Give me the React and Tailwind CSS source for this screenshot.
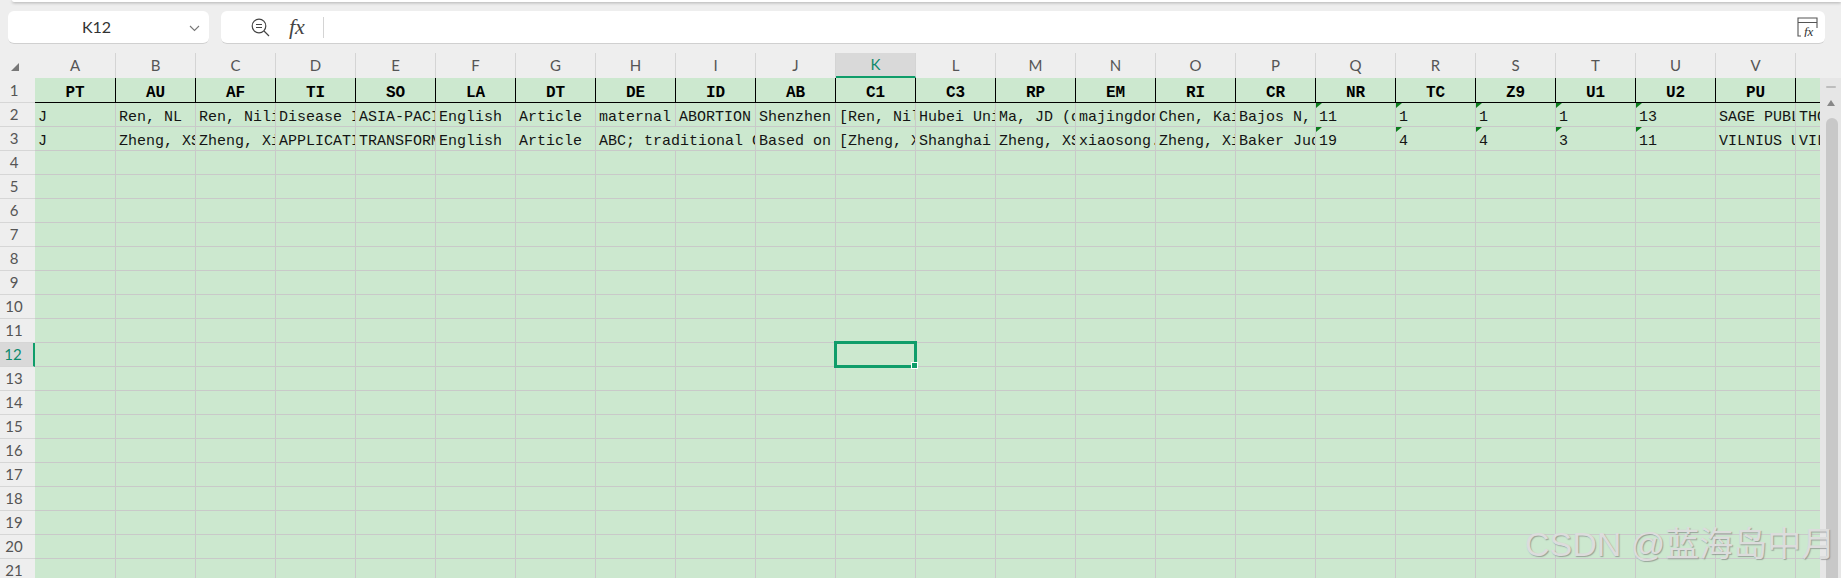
const COLS = ["A","B","C","D","E","F","G","H","I","J","K","L","M","N","O","P","Q","R","S","T","U","V","W"];
const R1 = ["PT","AU","AF","TI","SO","LA","DT","DE","ID","AB","C1","C3","RP","EM","RI","CR","NR","TC","Z9","U1","U2","PU",""];
const R2 = ["J","Ren, NL","Ren, Nili","Disease Identification","ASIA-PACIFIC JOURNAL","English","Article","maternal","ABORTION","Shenzhen","[Ren, Nili]","Hubei University","Ma, JD (corresponding)","majingdong","Chen, Kai","Bajos N,","11","1","1","1","13","SAGE PUBLICATIONS","THOUSAND OAKS"];
const R3 = ["J","Zheng, XS","Zheng, Xiaosong","APPLICATION","TRANSFORMATIONS","English","Article","ABC; traditional Chinese",null,"Based on","[Zheng, Xiaosong]","Shanghai University","Zheng, XS (corresponding)","xiaosong.zheng","Zheng, Xiaosong","Baker Judy","19","4","4","3","11","VILNIUS UNIVERSITY","VILNIUS"];
const EMPTY = COLS.map(() => "");
const ROWS = Array.from({ length: 21 }, (_, i) => i + 1);
const mono = "font-['Liberation_Mono','Courier_New',monospace]";
const ui = "font-['Lato','Noto_Sans',sans-serif]";

function Triangle() {
  return (
    <svg className="absolute left-0 top-0" width="6" height="5" viewBox="0 0 6 5">
      <polygon points="0,0 6,0 0,5" fill="#0b7d1c" />
    </svg>
  );
}

function HeaderRow() {
  return (
    <div className="flex h-[25px] shrink-0">
      {R1.map((t, i) => (
        <div
          key={i}
          className={`${i === 0 ? "w-[81px]" : "w-[80px]"} h-[25px] shrink-0 border-r border-b border-black bg-[#cce8cf] pt-[7px] text-center text-[16px] leading-[16px] font-bold text-black overflow-hidden ${mono}`}
        >
          {t}
        </div>
      ))}
    </div>
  );
}

function DataRow({ cells, tri }) {
  return (
    <div className="flex h-[24px] shrink-0">
      {cells.map((t, i) => {
        if (t === null) return null;
        const span = cells[i + 1] === null;
        const width = i === 0 ? "w-[81px]" : span ? "w-[160px]" : "w-[80px]";
        return (
          <div
            key={i}
            className={`${width} relative h-[24px] shrink-0 border-r border-b border-[#c9c9c9] pl-[3px] pt-[7px] text-[15px] leading-[15px] whitespace-nowrap overflow-hidden text-[#141414] ${mono}`}
          >
            {tri && i >= 16 && i <= 20 && <Triangle />}
            {t}
          </div>
        );
      })}
    </div>
  );
}

export default function App() {
  return (
    <div className="relative flex h-[578px] w-[1841px] flex-col overflow-hidden bg-[#eeeeee]">
      <div className="ml-[12px] h-[2px] shrink-0 rounded-bl bg-white shadow-[0_1px_3px_rgba(0,0,0,0.3)]" />

      <div className={`flex h-[51px] shrink-0 gap-[12px] pl-[8px] pr-[16px] pt-[9px] pb-[9px] ${ui}`}>
        <div className="relative flex h-[33px] w-[201px] items-center justify-center rounded-md border-b border-[#d0d0d0] bg-white pr-[24px] text-[16px] text-[#333]">
          K12
          <svg className="absolute right-[9px] top-[14px]" width="11" height="7" viewBox="0 0 11 7" fill="none" stroke="#777" strokeWidth="1.1">
            <path d="M1 1 L5.5 5.5 L10 1" />
          </svg>
        </div>
        <div className="flex h-[33px] flex-1 items-center rounded-md border-b border-[#d0d0d0] bg-white">
          <svg className="ml-[30px]" width="19" height="19" viewBox="0 0 19 19" fill="none" stroke="#444" strokeWidth="1.2">
            <circle cx="8" cy="8" r="6.8" />
            <path d="M5 6.5 H11 M5 9.5 H11 M13 13 L18 18" />
          </svg>
          <span className="ml-[19px] w-[20px] font-['Liberation_Serif',serif] text-[22px] italic leading-none text-[#444]">fx</span>
          <div className="ml-[14px] h-[21px] w-px bg-[#d4d4d4]" />
          <div className="flex-1" />
          <svg className="mr-[7px]" width="21" height="20" viewBox="0 0 21 20" fill="none" stroke="#555" strokeWidth="1.1">
            <path d="M4 19 H1 V1 H20 V11 M1 5.5 H20" />
            <text x="7" y="18.5" fontSize="13" fontStyle="italic" fontFamily="Liberation Serif, serif" fill="#333" stroke="none">fx</text>
          </svg>
        </div>
      </div>

      <div className={`flex h-[25px] shrink-0 overflow-hidden text-[15px] text-[#555] ${ui}`}>
        <div className="flex w-[35px] shrink-0 items-center">
          <svg className="ml-[11px] mt-[3px]" width="8" height="8" viewBox="0 0 8 8">
            <polygon points="8,0 8,8 0,8" fill="#777" />
          </svg>
        </div>
        {COLS.map((c, i) => (
          <div
            key={c}
            className={`${i === 0 ? "w-[81px]" : "w-[80px]"} flex shrink-0 items-center justify-center border-r border-[#d4d4d4] ${
              c === "K" ? "border-b-2 border-b-[#0f9d6a] bg-[#d9d9d9] text-[#0f8a6c]" : ""
            }`}
          >
            {c === "W" ? "" : c}
          </div>
        ))}
      </div>

      <div className="flex min-h-0 flex-1">
        <div className={`w-[35px] shrink-0 overflow-hidden text-[15px] text-[#555] ${ui}`}>
          {ROWS.map((n) => (
            <div
              key={n}
              className={`${n === 1 ? "h-[25px]" : "h-[24px]"} flex items-center justify-center border-b border-[#d6d6d6] pr-[7px] ${
                n === 12 ? "border-r-2 border-r-[#0f9d6a] bg-[#d9d9d9] pr-[5px] text-[#0f8a6c]" : ""
              }`}
            >
              {n}
            </div>
          ))}
        </div>

        <div className="w-[1785px] shrink-0 overflow-hidden bg-[#cce8cf]">
          <HeaderRow />
          <DataRow cells={R2} tri />
          <DataRow cells={R3} tri />
          {ROWS.slice(3).map((n) => (
            <DataRow key={n} cells={EMPTY} />
          ))}
        </div>

        <div className="flex flex-1 flex-col items-start bg-[#e6e6e6] pl-[6px]">
          <div className="mt-[8px] h-[2px] w-[10px] rounded bg-[#bdbdbd]" />
          <svg className="ml-[1px] mt-[12px]" width="8" height="6" viewBox="0 0 8 6">
            <polygon points="4,0 8,6 0,6" fill="#888" />
          </svg>
          <div className="mt-[12px] w-[12px] flex-1 rounded-t-md bg-[#c8c8c8]" />
        </div>
      </div>

      <div className="absolute left-[834px] top-[341px] h-[27px] w-[83px] border-[3px] border-[#0f9d6a]">
        <div className="absolute -bottom-[4px] -right-[4px] size-[7px] border border-white bg-[#0f9d6a]" />
      </div>

      <div className="absolute left-[1525px] top-[524px] whitespace-nowrap font-['Liberation_Sans','Noto_Sans_CJK_SC',sans-serif] text-[34px] leading-[40px] text-[#dcdcdc] [text-shadow:1px_1px_1px_rgba(110,110,110,0.55)]">
        CSDN @蓝海岛中月
      </div>
    </div>
  );
}
